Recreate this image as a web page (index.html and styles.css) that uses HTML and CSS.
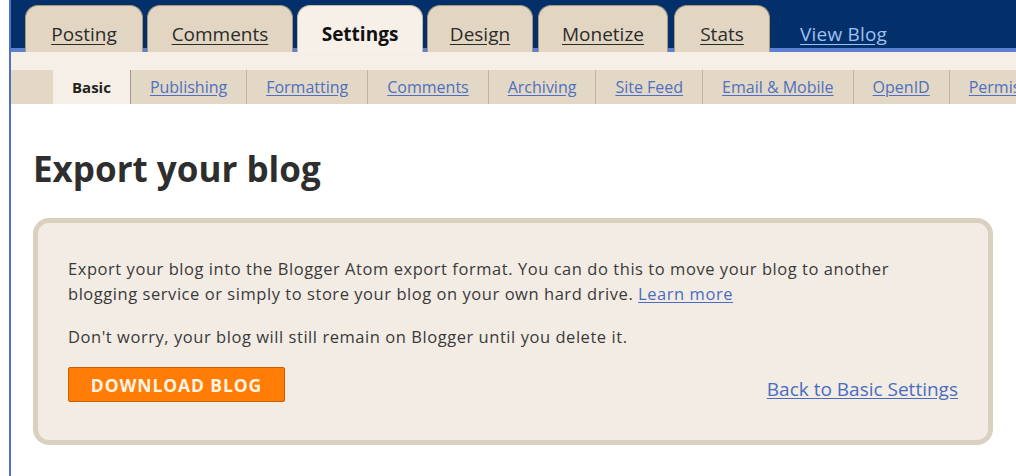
FILE: index.html
```html
<!DOCTYPE html>
<html lang="en">
<head>
<meta charset="utf-8">
<title>Blogger: Export your blog</title>
<link rel="stylesheet" href="styles.css">
</head>
<body>
<div class="page">
  <div class="header">
    <nav class="tabs">
      <a class="tab" href="#">Posting</a>
      <a class="tab" href="#">Comments</a>
      <a class="tab active" href="#">Settings</a>
      <a class="tab" href="#">Design</a>
      <a class="tab" href="#">Monetize</a>
      <a class="tab" href="#">Stats</a>
      <a class="view-blog" href="#">View Blog</a>
    </nav>
  </div>
  <div class="subnav">
    <ul class="subtabs">
      <li class="spacer"></li>
      <li class="active"><span>Basic</span></li>
      <li><a href="#">Publishing</a></li>
      <li><a href="#">Formatting</a></li>
      <li><a href="#">Comments</a></li>
      <li><a href="#">Archiving</a></li>
      <li><a href="#">Site Feed</a></li>
      <li><a href="#">Email &amp; Mobile</a></li>
      <li><a href="#">OpenID</a></li>
      <li><a href="#">Permissions</a></li>
    </ul>
  </div>
  <main class="content">
    <h1 class="title">Export your blog</h1>
    <section class="panel">
      <p class="intro">Export your blog into the Blogger Atom export format. You can do this to move your blog to another blogging service or simply to store your blog on your own hard drive. <a href="#">Learn more</a></p>
      <p>Don't worry, your blog will still remain on Blogger until you delete it.</p>
      <div class="actions">
        <button class="download" type="button">DOWNLOAD BLOG</button>
        <a class="back" href="#">Back to Basic Settings</a>
      </div>
    </section>
  </main>
</div>
</body>
</html>
```
FILE: styles.css
```css
html, body {
  margin: 0;
  padding: 0;
  background: #ffffff;
  overflow: hidden;
}

body {
  font-family: "Open Sans", "DejaVu Sans", sans-serif;
  color: #333333;
}

.page {
  margin-left: 9px;
  border-left: 2px solid #4f72c4;
  min-height: 476px;
}

/* top navigation bar with the main tabs */
.header {
  background: linear-gradient(to bottom, #03306a 0, #03306a 48px, #5b80d2 48px, #5b80d2 52px);
  height: 52px;
  padding-left: 14px;
  box-sizing: border-box;
  overflow: hidden;
}

.tabs {
  display: flex;
  align-items: flex-end;
  gap: 4px;
  height: 52px;
  padding-top: 5px;
  box-sizing: border-box;
}

.tab {
  display: flex;
  align-items: center;
  justify-content: center;
  height: 47px;
  box-sizing: border-box;
  padding: 10px 0 0;
  background: #e2d6c2;
  border: 1px solid #a8987c;
  border-bottom: none;
  border-radius: 13px 13px 0 0;
  color: #2b2b2b;
  font-size: 19px;
  text-decoration: underline;
  text-underline-offset: 3px;
}

.tab:nth-child(1) { width: 118px; }
.tab:nth-child(2) { width: 146px; }
.tab:nth-child(3) { width: 126px; }
.tab:nth-child(4) { width: 106px; }
.tab:nth-child(5) { width: 130px; margin-left: 1px; }
.tab:nth-child(6) { width: 96px; margin-left: 2px; }

.tab.active {
  background: #f6f0e8;
  border-color: #c9bba3;
  color: #111111;
  font-weight: 700;
  text-decoration: none;
}

.view-blog {
  align-self: center;
  margin: 10px 0 0 26px;
  color: #9fc0f0;
  font-size: 19px;
  letter-spacing: 0.2px;
  text-decoration: underline;
  text-underline-offset: 3px;
}

/* second-level settings tabs */
.subnav {
  background: #f6efe7;
  padding-top: 18px;
  overflow: hidden;
}

.subtabs {
  display: flex;
  margin: 0;
  padding: 0;
  list-style: none;
  height: 34px;
  background: #e3d8c5;
  white-space: nowrap;
}

.subtabs li {
  display: flex;
  align-items: center;
  padding: 0 19px;
  border-right: 1px solid #c2b49b;
  font-size: 16px;
  flex: none;
}

.subtabs li.spacer {
  width: 42px;
  padding: 0;
  border-right: none;
}

.subtabs li.active {
  background: #f6efe7;
  border-right-color: #a89a82;
  font-size: 15px;
  font-weight: 700;
  color: #222222;
}

.subtabs a {
  color: #4d70c2;
  text-decoration: underline;
  text-underline-offset: 2px;
}

/* page body */
.content {
  padding: 43px 0 0 22px;
}

.title {
  margin: 0;
  font-size: 35px;
  line-height: 44px;
  font-weight: 700;
  color: #2e2e2e;
}

.panel {
  margin-top: 27px;
  width: 960px;
  box-sizing: border-box;
  background: #f3ece4;
  border: 5px solid #dad0bf;
  border-radius: 16px;
  padding: 33px 30px 38px 30px;
  font-size: 16.5px;
  letter-spacing: 0.55px;
  line-height: 25px;
  color: #3a3a3a;
}

.panel p {
  margin: 0 0 18px;
}

.panel .intro {
  max-width: 835px;
}

.panel a {
  color: #4a6cc0;
  text-decoration: underline;
  text-underline-offset: 2px;
}

.actions {
  display: flex;
  justify-content: space-between;
  align-items: flex-end;
}

.download {
  width: 217px;
  height: 35px;
  background: #ff7c07;
  border: 1px solid #cf5e00;
  border-radius: 2px;
  color: #fff4e2;
  font-family: inherit;
  font-size: 17.5px;
  font-weight: 700;
  letter-spacing: 0.9px;
  padding: 0;
}

.panel .back {
  font-size: 19px;
  letter-spacing: 0;
  line-height: 24px;
  margin-bottom: 1px;
}
```
